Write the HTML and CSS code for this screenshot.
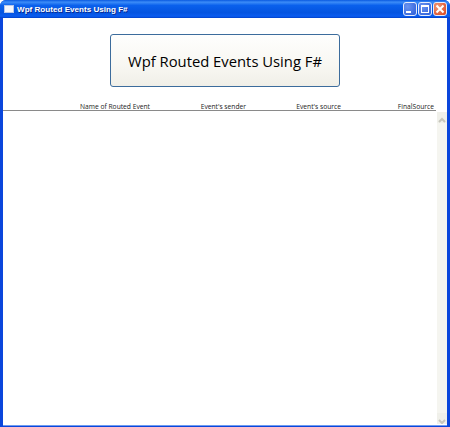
FILE: index.html
```html
<!DOCTYPE html>
<html lang="en">
<head>
<meta charset="utf-8">
<title>Wpf Routed Events Using F#</title>
<link rel="stylesheet" href="styles.css">
</head>
<body>
<div class="window">
  <div class="titlebar">
    <div class="app-icon"></div>
    <span class="title">Wpf Routed Events Using F#</span>
    <div class="controls">
      <div class="ctl">
        <svg width="12" height="12" viewBox="0 0 12 12"><rect x="2" y="8" width="5" height="2" fill="#fff"/></svg>
      </div>
      <div class="ctl">
        <svg width="12" height="12" viewBox="0 0 12 12"><rect x="2.5" y="2.5" width="7" height="7" fill="none" stroke="#fff" stroke-width="1"/><rect x="2" y="2" width="8" height="2" fill="#fff"/></svg>
      </div>
      <div class="ctl close">
        <svg width="12" height="12" viewBox="0 0 12 12"><path d="M2.5 2.5l7 7M9.5 2.5l-7 7" stroke="#fff" stroke-width="2" fill="none"/></svg>
      </div>
    </div>
  </div>
  <div class="client">
    <div class="button-row">
      <button class="big-button">Wpf Routed Events Using F#</button>
    </div>
    <div class="grid-header">
      <span class="col">Name of Routed Event</span>
      <span class="col">Event's sender</span>
      <span class="col">Event's source</span>
      <span class="col">FinalSource</span>
    </div>
    <div class="list">
      <div class="rows"></div>
      <div class="scrollbar">
        <div class="arrow">
          <svg width="10" height="11" viewBox="0 0 10 11"><path d="M2 7L5 4l3 3" fill="none" stroke="#c6c6bc" stroke-width="2"/></svg>
        </div>
        <div class="arrow">
          <svg width="10" height="11" viewBox="0 0 10 11"><path d="M2 4L5 7l3-3" fill="none" stroke="#c6c6bc" stroke-width="2"/></svg>
        </div>
      </div>
    </div>
  </div>
</div>
</body>
</html>
```
FILE: styles.css
```css
html, body {
  margin: 0;
  padding: 0;
  width: 450px;
  height: 427px;
  overflow: hidden;
  background: #fff;
}
.window {
  width: 450px;
  height: 427px;
  display: flex;
  flex-direction: column;
  background: #0a46dc;
  border-radius: 6px 6px 0 0;
  overflow: hidden;
  font-family: "Liberation Sans", Arial, sans-serif;
}
.titlebar {
  height: 18px;
  flex: none;
  display: flex;
  align-items: center;
  padding: 0 3px 0 4px;
  background: linear-gradient(180deg, #0a5ae0 0%, #3c8cf8 12%, #0a60ec 30%, #0454e0 70%, #0a5cf0 90%, #0040c8 100%);
}
.app-icon {
  width: 8px;
  height: 6px;
  background: #f4f6fb;
  border: 1px solid #b8c8e8;
  margin-right: 3px;
}
.title {
  color: #fff;
  font-size: 8.1px;
  font-weight: bold;
  text-shadow: 1px 1px 0 #0a2a90;
  white-space: nowrap;
}
.controls {
  margin-left: auto;
  display: flex;
  gap: 1px;
}
.ctl {
  width: 12px;
  height: 12px;
  border: 1px solid #e4ecfc;
  border-radius: 3px;
  background: radial-gradient(circle at 30% 30%, #6a94f0, #2a5cd8);
  display: flex;
  align-items: center;
  justify-content: center;
  overflow: hidden;
}
.ctl svg {
  flex: none;
}
.close {
  background: radial-gradient(circle at 30% 30%, #f09878, #d8431c);
}
.client {
  flex: 1;
  margin: 0 3px 1px;
  background: #fff;
  display: flex;
  flex-direction: column;
  min-height: 0;
  border-bottom: 1px solid #6e9cf0;
}
.button-row {
  height: 81px;
  flex: none;
  display: flex;
  justify-content: center;
  align-items: flex-start;
  padding-top: 16px;
  box-sizing: border-box;
}
.big-button {
  width: 230px;
  height: 53px;
  border: 1px solid #3c6c9c;
  border-radius: 3px;
  background: linear-gradient(180deg, #fefefd 0%, #f8f7f2 60%, #f0efe8 100%);
  color: #000;
  font-family: "Open Sans", "Noto Sans", sans-serif;
  font-size: 14.8px;
  padding: 0;
}
.grid-header {
  flex: none;
  height: 9px;
  padding-top: 2px;
  margin-right: 11px;
  display: grid;
  grid-template-columns: 147px 96px 95px 93px;
  border-bottom: 1px solid #8a8a8a;
  font-family: "Open Sans", "Noto Sans", sans-serif;
  font-size: 6.7px;
  line-height: 11px;
  color: #222;
}
.col {
  text-align: right;
  white-space: nowrap;
}
.list {
  flex: 1;
  display: flex;
  min-height: 0;
}
.rows {
  flex: 1;
}
.scrollbar {
  width: 10px;
  flex: none;
  margin-top: 1px;
  margin-bottom: 1px;
  background: #f5f5f0;
  display: flex;
  flex-direction: column;
  justify-content: space-between;
  align-items: center;
}
.arrow {
  width: 10px;
  height: 11px;
  background: #f0f0ea;
  overflow: hidden;
}
```
